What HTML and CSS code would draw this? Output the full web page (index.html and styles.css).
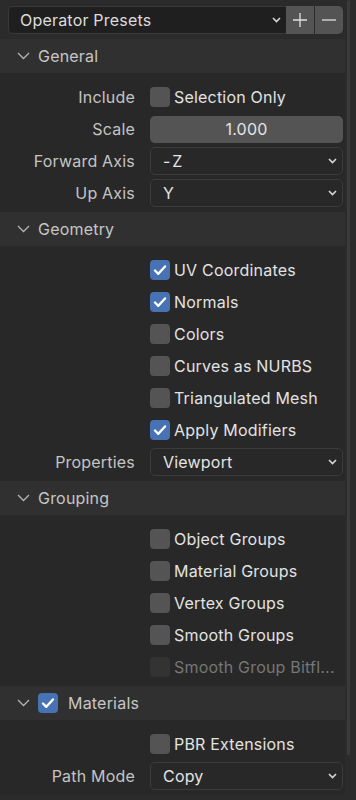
FILE: index.html
```html
<!DOCTYPE html>
<html lang="en">
<head>
    <meta charset="UTF-8">
    <meta name="viewport" content="width=device-width, initial-scale=1.0">
    <title>Export OBJ - Operator Presets</title>
    <link rel="stylesheet" href="styles.css">
</head>
<body>
    <div class="region">
        <div class="main">
            <div class="presets">
                <div class="preset-select">
                    <span>Operator Presets</span>
                    <svg class="arrow" width="9" height="6" viewBox="0 0 9 6"><path d="M1 1l3.5 3.5L8 1" fill="none" stroke="#d6d6d6" stroke-width="1.6"/></svg>
                </div>
                <div class="preset-btn">
                    <svg width="14" height="14" viewBox="0 0 14 14"><path d="M7 0v14M0 7h14" stroke="#e0e0e0" stroke-width="1.3"/></svg>
                </div>
                <div class="preset-btn last">
                    <svg width="14" height="14" viewBox="0 0 14 14"><path d="M0 7h14" stroke="#e0e0e0" stroke-width="1.3"/></svg>
                </div>
            </div>

            <!-- General -->
            <div class="panel-head">
                <svg class="fold" width="13" height="8" viewBox="0 0 13 8"><path d="M1 1l5.5 5.5L12 1" fill="none" stroke="#b4b4b4" stroke-width="1.3"/></svg>
                <span>General</span>
            </div>
            <div class="panel-body">
                <div class="row">
                    <span class="label">Include</span>
                    <div class="check"><span class="box"></span>Selection Only</div>
                </div>
                <div class="row">
                    <span class="label">Scale</span>
                    <div class="number">1.000</div>
                </div>
                <div class="row">
                    <span class="label">Forward Axis</span>
                    <div class="select"><span>-&#8202;Z</span><svg class="arrow" width="9" height="6" viewBox="0 0 9 6"><path d="M1 1l3.5 3.5L8 1" fill="none" stroke="#d6d6d6" stroke-width="1.6"/></svg></div>
                </div>
                <div class="row">
                    <span class="label">Up Axis</span>
                    <div class="select"><span>Y</span><svg class="arrow" width="9" height="6" viewBox="0 0 9 6"><path d="M1 1l3.5 3.5L8 1" fill="none" stroke="#d6d6d6" stroke-width="1.6"/></svg></div>
                </div>
            </div>

            <!-- Geometry -->
            <div class="panel-head">
                <svg class="fold" width="13" height="8" viewBox="0 0 13 8"><path d="M1 1l5.5 5.5L12 1" fill="none" stroke="#b4b4b4" stroke-width="1.3"/></svg>
                <span>Geometry</span>
            </div>
            <div class="panel-body">
                <div class="row"><span class="label"></span><div class="check"><span class="box on"><svg width="14" height="12" viewBox="0 0 14 12"><path d="M2 6.5l3.3 3.3L12 2.5" fill="none" stroke="#fff" stroke-width="2.4" stroke-linecap="round" stroke-linejoin="round"/></svg></span>UV Coordinates</div></div>
                <div class="row"><span class="label"></span><div class="check"><span class="box on"><svg width="14" height="12" viewBox="0 0 14 12"><path d="M2 6.5l3.3 3.3L12 2.5" fill="none" stroke="#fff" stroke-width="2.4" stroke-linecap="round" stroke-linejoin="round"/></svg></span>Normals</div></div>
                <div class="row"><span class="label"></span><div class="check"><span class="box"></span>Colors</div></div>
                <div class="row"><span class="label"></span><div class="check"><span class="box"></span>Curves as NURBS</div></div>
                <div class="row"><span class="label"></span><div class="check"><span class="box"></span>Triangulated Mesh</div></div>
                <div class="row"><span class="label"></span><div class="check"><span class="box on"><svg width="14" height="12" viewBox="0 0 14 12"><path d="M2 6.5l3.3 3.3L12 2.5" fill="none" stroke="#fff" stroke-width="2.4" stroke-linecap="round" stroke-linejoin="round"/></svg></span>Apply Modifiers</div></div>
                <div class="row">
                    <span class="label">Properties</span>
                    <div class="select"><span>Viewport</span><svg class="arrow" width="9" height="6" viewBox="0 0 9 6"><path d="M1 1l3.5 3.5L8 1" fill="none" stroke="#d6d6d6" stroke-width="1.6"/></svg></div>
                </div>
            </div>

            <!-- Grouping -->
            <div class="panel-head">
                <svg class="fold" width="13" height="8" viewBox="0 0 13 8"><path d="M1 1l5.5 5.5L12 1" fill="none" stroke="#b4b4b4" stroke-width="1.3"/></svg>
                <span>Grouping</span>
            </div>
            <div class="panel-body">
                <div class="row"><span class="label"></span><div class="check"><span class="box"></span>Object Groups</div></div>
                <div class="row"><span class="label"></span><div class="check"><span class="box"></span>Material Groups</div></div>
                <div class="row"><span class="label"></span><div class="check"><span class="box"></span>Vertex Groups</div></div>
                <div class="row"><span class="label"></span><div class="check"><span class="box"></span>Smooth Groups</div></div>
                <div class="row"><span class="label"></span><div class="check disabled"><span class="box"></span>Smooth Group Bitfl...</div></div>
            </div>

            <!-- Materials -->
            <div class="panel-head">
                <svg class="fold" width="13" height="8" viewBox="0 0 13 8"><path d="M1 1l5.5 5.5L12 1" fill="none" stroke="#b4b4b4" stroke-width="1.3"/></svg>
                <span class="box on head-box"><svg width="14" height="12" viewBox="0 0 14 12"><path d="M2 6.5l3.3 3.3L12 2.5" fill="none" stroke="#fff" stroke-width="2.4" stroke-linecap="round" stroke-linejoin="round"/></svg></span>
                <span>Materials</span>
            </div>
            <div class="panel-body">
                <div class="row"><span class="label"></span><div class="check"><span class="box"></span>PBR Extensions</div></div>
                <div class="row">
                    <span class="label">Path Mode</span>
                    <div class="select"><span>Copy</span><svg class="arrow" width="9" height="6" viewBox="0 0 9 6"><path d="M1 1l3.5 3.5L8 1" fill="none" stroke="#d6d6d6" stroke-width="1.6"/></svg></div>
                </div>
            </div>
        </div>
        <div class="scrollbar"></div>
    </div>
</body>
</html>
```

FILE: styles.css
```css
body {
    margin: 0;
    background: #2b2b2b;
    font-family: 'Inter', 'Noto Sans', sans-serif;
    font-size: 16px;
    letter-spacing: 0.2px;
    color: #e2e2e2;
    overflow: hidden;
}
.region {
    display: flex;
    align-items: flex-start;
    height: 800px;
}
.main {
    width: 345px;
    background: #2b2b2b;
}
.scrollbar {
    width: 3px;
    height: 755px;
    margin-left: 2px;
    background: #3a3a3a;
    border-radius: 2px;
}
.presets {
    display: flex;
    height: 28px;
    margin: 6px 2px 5px 8px;
}
.preset-select {
    flex: 1;
    display: flex;
    align-items: center;
    justify-content: space-between;
    background: #1f1f1f;
    border: 1px solid #393939;
    border-right: none;
    border-radius: 5px 0 0 5px;
    padding: 0 5px 0 11px;
    color: #dcdcdc;
}
.preset-btn {
    width: 28px;
    display: flex;
    align-items: center;
    justify-content: center;
    background: #545454;
}
.preset-btn.last {
    margin-left: 1px;
    border-radius: 0 5px 5px 0;
}
.panel-head {
    display: flex;
    align-items: center;
    height: 34px;
    padding-left: 17px;
    background: #303030;
    color: #c6c6c6;
}
.fold {
    margin-right: 8px;
}
.panel-body {
    background: #282828;
    padding: 8px 2px 3px 0;
}
.row {
    display: grid;
    grid-template-columns: 135px 1fr;
    column-gap: 15px;
    align-items: center;
    height: 32px;
}
.label {
    text-align: right;
    color: #c4c4c4;
}
.check {
    display: flex;
    align-items: center;
    color: #e2e2e2;
    white-space: nowrap;
}
.check.disabled {
    color: #767676;
}
.check.disabled .box {
    background: #333333;
}
.box {
    width: 20px;
    height: 20px;
    border-radius: 4px;
    background: #545454;
    margin-right: 4px;
    display: flex;
    align-items: center;
    justify-content: center;
    flex-shrink: 0;
}
.box.on {
    background: #4772b3;
}
.head-box {
    margin-right: 10px;
}
.number {
    height: 27px;
    display: flex;
    align-items: center;
    justify-content: center;
    background: #545454;
    border-radius: 5px;
    color: #e4e4e4;
}
.select {
    height: 26px;
    display: flex;
    align-items: center;
    justify-content: space-between;
    border: 1px solid #3b3b3b;
    border-radius: 5px;
    background: #282828;
    padding: 0 5px 0 12px;
    color: #e4e4e4;
}
```
